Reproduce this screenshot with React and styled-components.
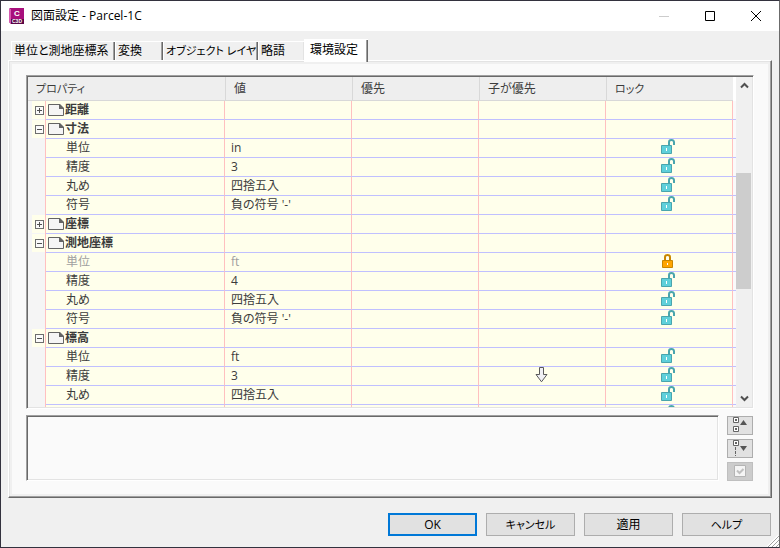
import React, { useState } from 'react';
import styled, { createGlobalStyle } from "styled-components";

const GlobalStyle = createGlobalStyle`
    * {
        box-sizing: border-box;
    }
    body {
        margin: 0;
        font-family: "Open Sans", "Noto Sans CJK JP", sans-serif;
        font-size: 12px;
        line-height: 18px;
        font-feature-settings: "palt";
        color: #000;
    }
    button, textarea {
        font: inherit;
        font-feature-settings: inherit;
        color: inherit;
    }
`;
const Window = styled.div`
    display: flex;
    flex-direction: column;
    height: 100vh;
    border: 1px solid #33323e;
    border-right-color: #6b6b6b;
    background-color: #f0f0f0;
    position: relative;
`;
const TitleBar = styled.header`
    display: flex;
    align-items: center;
    flex: none;
    height: 30px;
    padding-left: 8px;
    background-color: #fff;
`;
const Title = styled.h1`
    flex: 1;
    margin: 0 0 0 7px;
    font-size: 12px;
    font-weight: 400;
`;
const CaptionButton = styled.button`
    display: flex;
    align-items: center;
    justify-content: center;
    width: 46px;
    height: 30px;
    padding: 0;
    border: none;
    background: transparent;
`;
const Content = styled.main`
    display: flex;
    flex-direction: column;
    flex: 1;
    min-height: 0;
    padding: 8px 7px 11px;
`;
const Tabs = styled.div`
    display: flex;
    align-items: flex-end;
    flex: none;
    height: 21px;
    padding-left: 3px;
`;
const Tab = styled.button`
    flex: none;
    position: relative;
    z-index: ${({ $active }) => ($active ? 1 : 0)};
    width: ${({ $width }) => $width}px;
    height: ${({ $active }) => ($active ? 23 : 19)}px;
    margin-bottom: ${({ $active }) => ($active ? -2 : 0)}px;
    padding: 0 0 ${({ $active }) => ($active ? 2 : 0)}px ${({ $active }) => ($active ? 5 : 2)}px;
    border: solid #fff;
    border-width: 1px 0 0 1px;
    box-shadow: ${({ $next }) => ($next ? "inset -1px 0 #e3e3e3" : "inset -1px 0 #696969, inset -2px 0 #a0a0a0")};
    background-color: ${({ $active }) => ($active ? "#fff" : "#f0f0f0")};
    line-height: 16px;
    text-align: left;
    white-space: nowrap;
`;
const Kana = styled.span`
    font-size: 11px;
`;
const Panel = styled.section`
    display: flex;
    flex-direction: column;
    gap: 6px;
    flex: 1;
    min-height: 0;
    padding: 14px 17px 16px;
    border: 1px solid;
    border-color: #fff #696969 #696969 #fff;
    box-shadow: inset -1px -1px #a0a0a0, inset 1px 1px #e3e3e3, inset 0 0 0 3px #f0f0f0;
    background-color: #fafafa;
`;
const Sunken = styled.div`
    display: flex;
    min-width: 0;
    min-height: 0;
    padding: 1px;
    border: 1px solid;
    border-color: #a0a0a0 #fff #fff #a0a0a0;
    box-shadow: inset 1px 1px #696969, inset -1px -1px #e3e3e3;
`;
const GridFrame = styled(Sunken)`
    flex: 1;
    background-color: #fff;
`;
const Viewport = styled.div`
    flex: 1;
    overflow: hidden;
    background-color: #f5f5f5;
`;
const Grid = styled.table`
    width: 100%;
    table-layout: fixed;
    border-collapse: separate;
    border-spacing: 0;
    color: #3c3c3c;
`;
const HeadCell = styled.th`
    height: 24px;
    padding: 0 0 0 8px;
    border-bottom: 1px solid #d8d8d8;
    border-left: ${({ $first }) => ($first ? "none" : "1px solid #d8d8d8")};
    background-color: #eee;
    font-weight: 400;
    text-align: left;
`;
const HeadEnd = styled.td`
    padding: 0;
    background-color: #fff;
`;
const Row = styled.tr`
    height: 19px;
    color: ${({ $disabled }) => ($disabled ? "#a0a0a0" : "inherit")};
`;
const Gutter = styled.td`
    height: 19px;
    padding: 0 0 0 4px;
    border-right: 1px solid #ffc0c0;
    vertical-align: top;
`;
const Toggle = styled.button`
    display: flex;
    align-items: center;
    width: 13px;
    height: 18px;
    padding: 0 0 0 3px;
    border: none;
    background-color: #ffffeb;
`;
const Cell = styled.td`
    height: 19px;
    padding: 0 0 0 6px;
    border-right: 1px solid #ffc0c0;
    border-bottom: 1px solid #c0c0ff;
    background-color: #ffffeb;
    vertical-align: top;
`;
const NameCell = styled(Cell)`
    padding-left: ${({ $group }) => ($group ? 2 : 20)}px;
    font-weight: ${({ $group }) => ($group ? 700 : 400)};
`;
const IconCell = styled(Cell)`
    padding: 0;
`;
const EndCell = styled.td`
    padding: 0;
    border-bottom: 1px solid #c0c0ff;
    background-color: #fafafa;
`;
const Label = styled.div`
    display: flex;
    align-items: center;
    gap: 1px;
    height: 18px;
    white-space: nowrap;
`;
const IconSlot = styled.div`
    display: flex;
    justify-content: center;
    height: 18px;
`;
const LockButton = styled.button`
    display: block;
    width: 16px;
    height: 18px;
    padding: 0 0 3px;
    border: none;
    background: transparent;
`;
const Icon = styled.svg`
    display: block;
    flex: none;
`;
const ScrollBar = styled.div`
    display: flex;
    flex-direction: column;
    flex: none;
    width: 16px;
    background-color: #f0f0f0;
`;
const ScrollButton = styled.button`
    display: flex;
    align-items: center;
    justify-content: center;
    flex: none;
    height: 17px;
    padding: 0;
    border: none;
    background: transparent;
`;
const Track = styled.div`
    display: flex;
    flex: 1;
    flex-direction: column;
`;
const Space = styled.div`
    flex: ${({ $grow }) => $grow};
`;
const Thumb = styled.div`
    flex: 116;
    margin-right: 1px;
    background-color: #cdcdcd;
`;
const Lower = styled.div`
    display: flex;
    gap: 8px;
    flex: none;
    height: 66px;
`;
const NoteFrame = styled(Sunken)`
    flex: 1;
`;
const Note = styled.textarea`
    flex: 1;
    min-width: 0;
    padding: 2px 4px;
    border: none;
    outline: none;
    resize: none;
    background-color: transparent;
`;
const Tools = styled.div`
    display: flex;
    flex-direction: column;
    gap: 4px;
    padding: 1px 1px 0 0;
`;
const ToolButton = styled.button`
    width: 26px;
    height: 19px;
    padding: 0;
    border: 1px solid ${({ disabled }) => (disabled ? "#bfbfbf" : "#adadad")};
    background-color: ${({ disabled }) => (disabled ? "#ccc" : "#e1e1e1")};
`;
const Footer = styled.footer`
    display: flex;
    justify-content: flex-end;
    gap: 9px;
    flex: none;
    padding: 4px 8px 11px;
`;
const Button = styled.button`
    width: 89px;
    height: 23px;
    padding: 0;
    border: ${({ $primary }) => ($primary ? "2px solid #0078d7" : "1px solid #adadad")};
    background-color: #e1e1e1;
    line-height: 18px;
`;
const Grip = styled.svg`
    position: absolute;
    right: 0;
    bottom: 0;
`;

const tabs = [
    { label: "単位と測地座標系", width: 104 },
    { label: "変換", width: 48 },
    { label: <Kana>オブジェクト レイヤ</Kana>, width: 95 },
    { label: "略語", width: 46 },
    { label: "環境設定", width: 64 },
];

const groups = [
    { name: "距離", rows: [] },
    {
        name: "寸法", open: true, rows: [
            { name: "単位", value: "in" },
            { name: "精度", value: "3" },
            { name: "丸め", value: "四捨五入" },
            { name: "符号", value: "負の符号 '-'" },
        ]
    },
    { name: "座標", rows: [] },
    {
        name: "測地座標", open: true, rows: [
            { name: "単位", value: "ft", locked: true },
            { name: "精度", value: "4" },
            { name: "丸め", value: "四捨五入" },
            { name: "符号", value: "負の符号 '-'" },
        ]
    },
    {
        name: "標高", open: true, rows: [
            { name: "単位", value: "ft" },
            { name: "精度", value: "3", child: true },
            { name: "丸め", value: "四捨五入" },
            { name: "符号", value: "負の符号 '-'" },
        ]
    },
];

const AppIcon = () => (
    <Icon width="15" height="16" viewBox="0 0 15 16" fontFamily="Liberation Sans, sans-serif" fontWeight="700">
        <path d="M1 0H15V16H2L0 14V1Z" fill="#a80f7c" />
        <path d="M0 1H2V16L0 14Z" fill="#d65bb0" />
        <path d="M2 11H15V16H2Z" fill="#5a0545" />
        <text x="8" y="8" fontSize="8" fill="#fff" textAnchor="middle">C</text>
        <text x="8" y="15" fontSize="5" fill="#fff" textAnchor="middle">C3D</text>
    </Icon>
);

const PageIcon = () => (
    <Icon width="16" height="12" viewBox="0 0 16 12">
        <path d="M.5 .5H11.5L15.5 4.5V11.5H.5Z" fill="#f5f5f5" stroke="#646464" />
        <path d="M11 0H12L16 4V5H11Z" fill="#646464" />
    </Icon>
);

const ToggleIcon = ({ open }) => (
    <Icon width="9" height="9" viewBox="0 0 9 9" shapeRendering="crispEdges">
        <path d="M.5 .5H8.5V8.5H.5Z" fill="#fafafa" stroke="#6e6e6e" />
        <path d={open ? "M2 4.5H7" : "M2 4.5H7M4.5 2V7"} stroke="#505050" />
    </Icon>
);

const UnlockedIcon = () => (
    <Icon width="16" height="15" viewBox="0 0 16 15">
        <path d="M8 6V3.2Q8 1 10.4 1T13 3.2V6" fill="none" stroke="#4aa5ad" strokeWidth="2" />
        <path d="M.5 6.5H10.5V14.5H.5Z" fill="#5fd0da" stroke="#4aa5ad" />
        <path d="M5.5 9V12" stroke="#fff" />
    </Icon>
);

const LockedIcon = () => (
    <Icon width="16" height="15" viewBox="0 0 16 15">
        <path d="M4 7V4.2Q4 2 6.5 2T9 4.2V7" fill="none" stroke="#c88600" strokeWidth="2" />
        <path d="M1.5 7.5H11.5V14.5H1.5Z" fill="#ffa500" stroke="#c88600" />
        <path d="M6.5 10V12" stroke="#fff" />
    </Icon>
);

const ArrowIcon = () => (
    <Icon width="15" height="16" viewBox="0 0 15 16">
        <path d="M4.5 .5H8.5V7.5H12L6.5 14.8L1 7.5H4.5Z" fill="#f0f0f5" stroke="#5a5a5a" />
    </Icon>
);

const PropertyRow = ({ row }) => {
    const [locked, setLocked] = useState(!!row.locked);

    return (
        <Row $disabled={locked}>
            <Gutter />
            <NameCell><Label>{row.name}</Label></NameCell>
            <Cell><Label>{row.value}</Label></Cell>
            <Cell />
            <IconCell>{row.child && <IconSlot><ArrowIcon /></IconSlot>}</IconCell>
            <IconCell>
                <IconSlot>
                    <LockButton aria-label="ロック" aria-pressed={locked} onClick={() => setLocked(!locked)}>
                        {locked ? <LockedIcon /> : <UnlockedIcon />}
                    </LockButton>
                </IconSlot>
            </IconCell>
            <EndCell />
        </Row>
    )
}

const Group = ({ group }) => {
    const [open, setOpen] = useState(!!group.open);

    return (
        <tbody>
            <Row>
                <Gutter>
                    <Toggle aria-label={group.name} aria-expanded={open} onClick={() => setOpen(!open)}>
                        <ToggleIcon open={open} />
                    </Toggle>
                </Gutter>
                <NameCell $group><Label><PageIcon />{group.name}</Label></NameCell>
                <Cell />
                <Cell />
                <Cell />
                <Cell />
                <EndCell />
            </Row>
            {open && group.rows.map(row => <PropertyRow key={row.name} row={row} />)}
        </tbody>
    )
}

const App = () => {
    const [active, setActive] = useState(4);

    return (
        <>
            <GlobalStyle />
            <Window>
                <TitleBar>
                    <AppIcon />
                    <Title>図面設定 - Parcel-1C</Title>
                    <CaptionButton aria-label="最小化" disabled>
                        <Icon width="10" height="10"><path d="M0 5.5H10" stroke="#ccc" /></Icon>
                    </CaptionButton>
                    <CaptionButton aria-label="最大化">
                        <Icon width="10" height="10"><path d="M.5 .5H9.5V9.5H.5Z" fill="none" stroke="#000" /></Icon>
                    </CaptionButton>
                    <CaptionButton aria-label="閉じる">
                        <Icon width="10" height="10"><path d="M0 0L10 10M10 0L0 10" stroke="#000" /></Icon>
                    </CaptionButton>
                </TitleBar>
                <Content>
                    <Tabs role="tablist">
                        {tabs.map((tab, i) => (
                            <Tab
                                key={i}
                                role="tab"
                                aria-selected={i === active}
                                $active={i === active}
                                $next={i === active - 1}
                                $width={tab.width}
                                onClick={() => setActive(i)}
                            >
                                {tab.label}
                            </Tab>
                        ))}
                    </Tabs>
                    <Panel role="tabpanel">
                        <GridFrame>
                            <Viewport>
                                <Grid>
                                    <colgroup>
                                        <col width="18" />
                                        <col width="179" />
                                        <col />
                                        <col />
                                        <col />
                                        <col />
                                        <col width="3" />
                                    </colgroup>
                                    <thead>
                                        <tr>
                                            <HeadCell $first colSpan="2"><Kana>プロパティ</Kana></HeadCell>
                                            <HeadCell>値</HeadCell>
                                            <HeadCell>優先</HeadCell>
                                            <HeadCell>子が優先</HeadCell>
                                            <HeadCell><Kana>ロック</Kana></HeadCell>
                                            <HeadEnd />
                                        </tr>
                                    </thead>
                                    {groups.map(group => <Group key={group.name} group={group} />)}
                                </Grid>
                            </Viewport>
                            <ScrollBar>
                                <ScrollButton aria-label="上へ">
                                    <Icon width="9" height="7"><path d="M1 5.5L4.5 2L8 5.5" fill="none" stroke="#505050" strokeWidth="2" /></Icon>
                                </ScrollButton>
                                <Track>
                                    <Space $grow={79} />
                                    <Thumb />
                                    <Space $grow={101} />
                                </Track>
                                <ScrollButton aria-label="下へ">
                                    <Icon width="9" height="7"><path d="M1 1.5L4.5 5L8 1.5" fill="none" stroke="#505050" strokeWidth="2" /></Icon>
                                </ScrollButton>
                            </ScrollBar>
                        </GridFrame>
                        <Lower>
                            <NoteFrame>
                                <Note aria-label="説明" readOnly />
                            </NoteFrame>
                            <Tools>
                                <ToolButton aria-label="すべて折りたたむ">
                                    <Icon width="24" height="17">
                                        <path d="M5.5 .5H10.5V5.5H5.5ZM5.5 9.5H10.5V14.5H5.5Z" fill="#fff" stroke="#646464" />
                                        <path d="M7 2H9V4H7ZM7 11H9V13H7Z" fill="#646464" />
                                        <path d="M12 8L15.5 3L19 8Z" fill="#555" />
                                    </Icon>
                                </ToolButton>
                                <ToolButton aria-label="すべて展開">
                                    <Icon width="24" height="17">
                                        <path d="M5.5 .5H10.5V5.5H5.5Z" fill="#fff" stroke="#646464" />
                                        <path d="M7 2H9V4H7Z" fill="#646464" />
                                        <path d="M7.5 7V16" stroke="#646464" strokeDasharray="3 1" />
                                        <path d="M12 6L15.5 11L19 6Z" fill="#555" />
                                    </Icon>
                                </ToolButton>
                                <ToolButton aria-label="オプション" disabled>
                                    <Icon width="24" height="17">
                                        <path d="M6.5 2.5H17.5V13.5H6.5Z" fill="#f5f5f5" stroke="#b4b4b4" />
                                        <path d="M9 7.5L11.5 10L15.5 6" fill="none" stroke="#c0c0c0" strokeWidth="2" />
                                    </Icon>
                                </ToolButton>
                            </Tools>
                        </Lower>
                    </Panel>
                </Content>
                <Footer>
                    <Button $primary>OK</Button>
                    <Button><Kana>キャンセル</Kana></Button>
                    <Button>適用</Button>
                    <Button><Kana>ヘルプ</Kana></Button>
                </Footer>
                <Grip width="12" height="12">
                    <path d="M1 12L12 1M5 12L12 5M9 12L12 9" stroke="#fff" strokeWidth="3" />
                    <path d="M1 12L12 1M5 12L12 5M9 12L12 9" stroke="#a0a0a0" />
                </Grip>
            </Window>
        </>
    )
}

export default App
